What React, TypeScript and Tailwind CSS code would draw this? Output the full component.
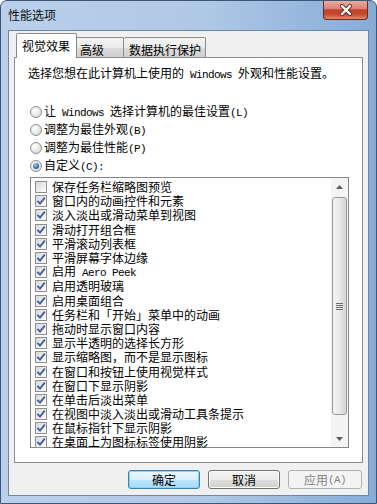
import React from "react";

const ASCII = /^[\x20-\x7e]+$/;
function T({ s }: { s: string }) {
  const parts = s.split(/([\x20-\x7e]+)/).filter((p) => p.length > 0);
  return (
    <>
      {parts.map((p, i) =>
        ASCII.test(p) ? (
          <span
            key={i}
            className="whitespace-pre font-['Liberation_Mono',monospace] text-[11px] tracking-[-0.6px]"
          >
            {p}
          </span>
        ) : (
          <span key={i}>{p}</span>
        )
      )}
    </>
  );
}

function Check({ on }: { on: boolean }) {
  return (
    <span className="w-[12px] h-[12px] shrink-0 border border-[#8e8f8f] bg-[linear-gradient(135deg,#d6d6d6,#f3f3f3_70%,#ffffff)] flex items-center justify-center">
      {on && (
        <svg width="10" height="10" viewBox="0 0 10 10">
          <path d="M1.4 4.8 L4 7.6 L8.8 1.6" fill="none" stroke="#3f5c9e" strokeWidth="1.8" />
        </svg>
      )}
    </span>
  );
}

function Radio({ on }: { on: boolean }) {
  return (
    <span className="w-[12px] h-[12px] shrink-0 rounded-full border border-[#8e8f8f] bg-[radial-gradient(circle_at_35%_35%,#ffffff,#e4e4e4_60%,#cdcdcd)] flex items-center justify-center">
      {on && (
        <span className="w-[6px] h-[6px] rounded-full bg-[radial-gradient(circle_at_40%_35%,#9fd2f5,#2d6cab_60%,#17396a)]" />
      )}
    </span>
  );
}

const items: [string, boolean][] = [
  ["保存任务栏缩略图预览", false],
  ["窗口内的动画控件和元素", true],
  ["淡入淡出或滑动菜单到视图", true],
  ["滑动打开组合框", true],
  ["平滑滚动列表框", true],
  ["平滑屏幕字体边缘", true],
  ["启用 Aero Peek", true],
  ["启用透明玻璃", true],
  ["启用桌面组合", true],
  ["任务栏和「开始」菜单中的动画", true],
  ["拖动时显示窗口内容", true],
  ["显示半透明的选择长方形", true],
  ["显示缩略图，而不是显示图标", true],
  ["在窗口和按钮上使用视觉样式", true],
  ["在窗口下显示阴影", true],
  ["在单击后淡出菜单", true],
  ["在视图中淡入淡出或滑动工具条提示", true],
  ["在鼠标指针下显示阴影", true],
  ["在桌面上为图标标签使用阴影", true],
];

const radios: [string, boolean][] = [
  ["让 Windows 选择计算机的最佳设置(L)", false],
  ["调整为最佳外观(B)", false],
  ["调整为最佳性能(P)", false],
  ["自定义(C):", true],
];

export default function App() {
  return (
    <div className="w-[377px] h-[504px] overflow-hidden rounded-t-[7px] border border-[#3b5677] bg-[linear-gradient(to_right,#bad0ea_0%,#afc8e5_55%,#85acd8_100%)] flex flex-col font-['Noto_Sans_CJK_SC',sans-serif] text-[12px] text-black">
      {/* title bar */}
      <div className="h-[29px] flex items-start shrink-0">
        <div className="ml-[7px] mt-[6px] leading-[16px] text-[#101010]">性能选项</div>
        <div className="ml-auto mr-[8px] -mt-px w-[45px] h-[20px] rounded-b-[4px] border border-t-0 border-[#6e2b1f] bg-[linear-gradient(to_bottom,#eab0a2_0%,#d98673_45%,#c4402a_52%,#c54a31_75%,#e58a6a_100%)] flex items-center justify-center">
          <svg width="14" height="12" viewBox="0 0 14 12">
            <path d="M3 2 L11 10 M11 2 L3 10" stroke="#5a2a22" strokeWidth="4" strokeLinecap="round" />
            <path d="M3 2 L11 10 M11 2 L3 10" stroke="#ffffff" strokeWidth="2.4" strokeLinecap="round" />
          </svg>
        </div>
      </div>

      {/* client area */}
      <div className="mx-[7px] mb-[7px] flex-1 border border-[#6f86a3] bg-[#f0f0f0] flex flex-col">
        {/* tabs */}
        <div className="ml-[5px] mt-[2px] h-[24px] flex items-end pl-[2px]">
          <div className="relative z-10 -mb-px h-[25px] w-[61px] border border-b-0 border-[#898c95] rounded-t-[2px] bg-white pl-[5px] pt-[5px] leading-[14px]">
            视觉效果
          </div>
          <div className="h-[20px] w-[47px] border border-b-0 border-l-0 border-[#898c95] rounded-tr-[2px] bg-[linear-gradient(to_bottom,#f3f3f3_0%,#ebebeb_50%,#dddddd_51%,#cfcfcf_100%)] pl-[3px] pt-[5px] leading-[14px]">
            高级
          </div>
          <div className="h-[20px] w-[82px] border border-b-0 border-l-0 border-[#898c95] rounded-t-[2px] bg-[linear-gradient(to_bottom,#f3f3f3_0%,#ebebeb_50%,#dddddd_51%,#cfcfcf_100%)] pl-[5px] pt-[5px] leading-[14px]">
            数据执行保护
          </div>
        </div>

        {/* panel */}
        <div className="ml-[5px] w-[349px] h-[406px] border border-[#898c95] bg-white flex flex-col">
          <div className="mt-[8px] pl-[13px] h-[14px] leading-[14px] whitespace-nowrap">
            <T s="选择您想在此计算机上使用的 Windows 外观和性能设置。" />
          </div>
          <div className="mt-[23px] flex flex-col">
            {radios.map(([label, on]) => (
              <div key={label} className="h-[18px] pl-[15px] flex items-center gap-[2px] leading-[14px] whitespace-nowrap">
                <Radio on={on} />
                <span>
                  <T s={label} />
                </span>
              </div>
            ))}
          </div>

          {/* list box */}
          <div className="mt-[2px] ml-[15px] w-[319px] h-[271px] border border-[#828790] bg-white flex">
            <div className="flex-1 pt-[2px] flex flex-col">
              {items.map(([label, on]) => (
                <div key={label} className="h-[14.2px] shrink-0 pl-[4px] flex items-center gap-[5px] leading-[14px] whitespace-nowrap">
                  <Check on={on} />
                  <span>
                    <T s={label} />
                  </span>
                </div>
              ))}
            </div>
            {/* scrollbar */}
            <div className="w-[17px] h-full bg-[#f4f4f4] flex flex-col items-center">
              <div className="h-[17px] w-full flex items-center justify-center">
                <svg width="7" height="4" viewBox="0 0 7 4">
                  <path d="M0 4 L3.5 0 L7 4 Z" fill="#5c5c5c" />
                </svg>
              </div>
              <div className="mt-[2px] w-[15px] h-[218px] rounded-[3px] border border-[#979797] bg-[linear-gradient(to_right,#f5f5f5,#e9e9e9_50%,#d4d4d4)] flex flex-col items-center justify-center gap-[1px]">
                <span className="w-[7px] h-[1px] bg-[#6b6b6b]" />
                <span className="w-[7px] h-[1px] bg-[#6b6b6b]" />
                <span className="w-[7px] h-[1px] bg-[#6b6b6b]" />
                <span className="w-[7px] h-[1px] bg-[#6b6b6b]" />
              </div>
              <div className="flex-1" />
              <div className="h-[17px] w-full flex items-center justify-center">
                <svg width="7" height="4" viewBox="0 0 7 4">
                  <path d="M0 0 L7 0 L3.5 4 Z" fill="#5c5c5c" />
                </svg>
              </div>
            </div>
          </div>
        </div>

        {/* buttons */}
        <div className="mt-[7px] pr-[6px] flex justify-end gap-[8px]">
          <div className="w-[72px] h-[19px] rounded-[3px] border border-[#3c7fb1] bg-[linear-gradient(to_bottom,#eaf6fd_0%,#d9f0fc_50%,#bee6fd_51%,#a7d9f5_100%)] shadow-[inset_0_0_0_1px_#8ed3f5] flex items-center justify-center leading-[14px]">
            确定
          </div>
          <div className="w-[72px] h-[19px] rounded-[3px] border border-[#707070] bg-[linear-gradient(to_bottom,#f2f2f2_0%,#ebebeb_50%,#dddddd_51%,#cfcfcf_100%)] shadow-[inset_0_0_0_1px_#fcfcfc] flex items-center justify-center leading-[14px]">
            取消
          </div>
          <div className="w-[74px] h-[19px] rounded-[3px] border border-[#adb2b5] bg-[#f4f4f4] flex items-center justify-center leading-[14px] text-[#838383]">
            <T s="应用(A)" />
          </div>
        </div>
      </div>
    </div>
  );
}
